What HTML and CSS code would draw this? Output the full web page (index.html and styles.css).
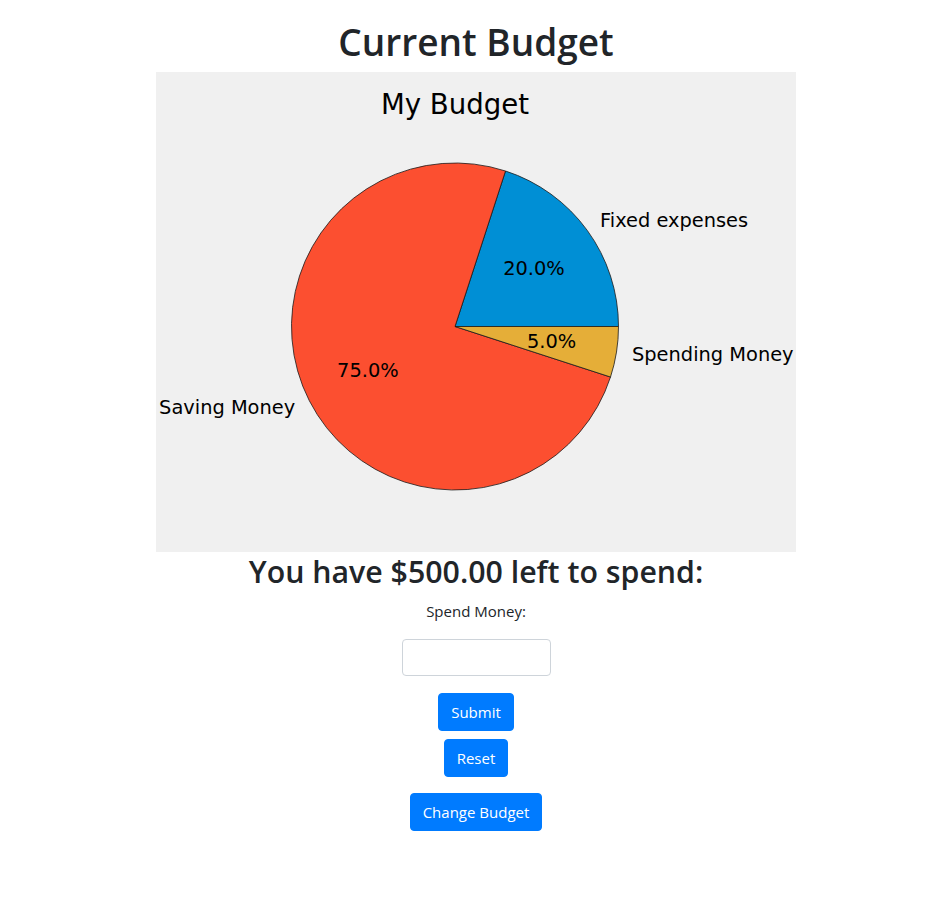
FILE: index.html
```html
<!DOCTYPE html>
<html lang="en">
<head>
<meta charset="utf-8">
<title>Current Budget</title>
<link rel="stylesheet" href="styles.css">
</head>
<body>
<main class="page">
  <h1 class="title">Current Budget</h1>
  <svg class="chart" width="640" height="480" viewBox="0 0 640 480" xmlns="http://www.w3.org/2000/svg">
    <rect width="640" height="480" fill="#f0f0f0"/>
    <text class="chart-title" x="299" y="41.8" text-anchor="middle">My Budget</text>
    <g stroke="#1a1a1a" stroke-width="0.8" stroke-linejoin="round">
      <path d="M299,254.5 L462.5,254.5 A163.5,163.5 0 0 0 349.52,99 Z" fill="#008fd5"/>
      <path d="M299,254.5 L349.52,99 A163.5,163.5 0 1 0 454.5,305.02 Z" fill="#fc4f30"/>
      <path d="M299,254.5 L454.5,305.02 A163.5,163.5 0 0 0 462.5,254.5 Z" fill="#e5ae38"/>
    </g>
    <text class="chart-label" x="444" y="154.7">Fixed expenses</text>
    <text class="chart-label" x="476" y="288.5">Spending Money</text>
    <text class="chart-label" x="139.2" y="342" text-anchor="end">Saving Money</text>
    <text class="chart-label" x="378" y="203" text-anchor="middle">20.0%</text>
    <text class="chart-label" x="395.6" y="276" text-anchor="middle">5.0%</text>
    <text class="chart-label" x="211.9" y="304.5" text-anchor="middle">75.0%</text>
  </svg>
  <h2 class="remaining">You have $500.00 left to spend:</h2>
  <form class="spend-form">
    <label class="spend-label" for="spend">Spend Money:</label>
    <input class="spend-input" id="spend" type="text">
    <button class="btn btn-submit" type="button">Submit</button>
    <button class="btn btn-reset" type="button">Reset</button>
  </form>
  <button class="btn btn-change" type="button">Change Budget</button>
</main>
</body>
</html>
```
FILE: styles.css
```css
html, body {
  margin: 0;
  padding: 0;
  background: #ffffff;
}

body {
  font-family: "Open Sans", "Noto Sans", "Liberation Sans", sans-serif;
  color: #212529;
}

.page {
  display: flex;
  flex-direction: column;
  align-items: center;
  padding-left: 25px;
}

.title {
  margin: 18px 0 6px;
  font-size: 37px;
  font-weight: 600;
  line-height: 48px;
  color: #212529;
}

.chart {
  display: block;
}

.chart-title {
  font-family: "DejaVu Sans", sans-serif;
  font-size: 27.6px;
  fill: #000;
}

.chart-label {
  font-family: "DejaVu Sans", sans-serif;
  font-size: 19.4px;
  fill: #000;
}

.remaining {
  margin: 1px 0 0;
  font-size: 30.3px;
  font-weight: 600;
  line-height: 38.4px;
  color: #212529;
}

.spend-form {
  display: flex;
  flex-direction: column;
  align-items: center;
}

.spend-label {
  margin-top: 7.5px;
  font-size: 15px;
  line-height: 24px;
}

.spend-input {
  box-sizing: border-box;
  margin-top: 16px;
  width: 149px;
  height: 37px;
  border: 1px solid #ced4da;
  border-radius: 4px;
  background: #fff;
  font: inherit;
}

.btn {
  box-sizing: border-box;
  height: 38px;
  padding: 6px 12px;
  border: 1px solid #007bff;
  border-radius: 4px;
  background: #007bff;
  color: #ffffff;
  font-family: "Open Sans", "Noto Sans", "Liberation Sans", sans-serif;
  font-size: 15px;
  line-height: 24px;
}

.btn-submit {
  margin-top: 17px;
}

.btn-reset {
  margin-top: 8px;
}

.btn-change {
  margin-top: 16px;
}
```
